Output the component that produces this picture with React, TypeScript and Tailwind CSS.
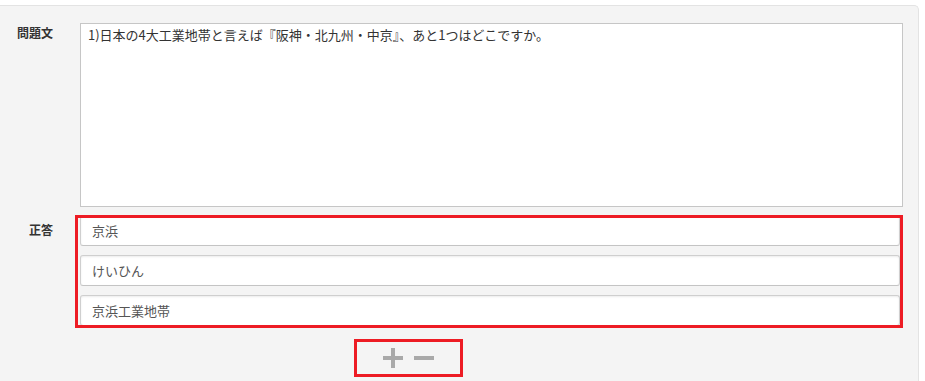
const font = '"Noto Sans CJK JP", "Noto Sans", sans-serif';

const answers = ['京浜', 'けいひん', '京浜工業地帯'];

export default function App() {
  return (
    <div className="h-[381px] w-[925px] overflow-hidden bg-white" style={{ fontFamily: font }}>
      <div className="mt-[5px] h-[400px] w-[919px] rounded-tr-[5px] border-t border-r border-[#e3e3e3] bg-[#f4f4f4] pt-[17px]">
        {/* question */}
        <div className="flex">
          <div className="w-[80px] pr-[27px] text-right text-[12px] font-bold leading-[20px] text-[#333]">
            問題文
          </div>
          <div className="h-[184px] w-[823px] border border-[#c6c6c6] bg-white pl-[7px] pt-[1px] text-[13px] leading-[20px] text-[#333]">
            1)日本の4大工業地帯と言えば『阪神・北九州・中京』、あと1つはどこですか。
          </div>
        </div>

        {/* answers */}
        <div className="mt-[8px] flex">
          <div className="w-[80px] pr-[27px] pt-[5px] text-right text-[12px] font-bold leading-[20px] text-[#333]">
            正答
          </div>
          <div className="relative flex w-[820px] flex-col gap-[9px]">
            {answers.map((a) => (
              <div
                key={a}
                className="flex h-[31px] items-center rounded-[3px] border border-[#cfcfcf] border-b-[#c4c4c4] bg-white pl-[11px] text-[13px] text-[#555] shadow-[inset_0_1px_2px_rgba(0,0,0,0.08)]"
              >
                {a}
              </div>
            ))}
            <div className="pointer-events-none absolute top-0 right-[-3px] bottom-[-2px] left-[-5px] border-[3px] border-[#ed1c24]" />
          </div>
        </div>

        {/* add / remove */}
        <div className="mt-[13px] ml-[354px] flex h-[38px] w-[109px] items-center justify-center gap-[11px] border-[3px] border-[#ed1c24]">
          <svg width="20" height="20" viewBox="0 0 20 20">
            <rect x="8" y="0" width="4" height="20" fill="#a9a9a9" />
            <rect x="0" y="8" width="20" height="4" fill="#a9a9a9" />
          </svg>
          <svg width="20" height="20" viewBox="0 0 20 20">
            <rect x="0" y="8" width="20" height="4" fill="#a9a9a9" />
          </svg>
        </div>
      </div>
    </div>
  );
}
